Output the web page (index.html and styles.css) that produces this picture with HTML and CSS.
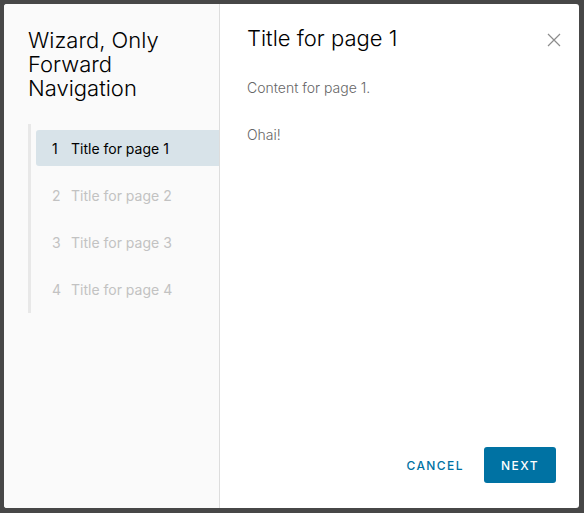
FILE: index.html
```html
<!DOCTYPE html>
<html>
<head>
<meta charset="utf-8">
<link rel="stylesheet" href="styles.css">
</head>
<body>
<div class="modal">
  <aside class="side">
    <h1 class="wizard-title">Wizard, Only Forward Navigation</h1>
    <nav class="steps">
      <div class="step active"><span class="num">1</span><span>Title for page 1</span></div>
      <div class="step"><span class="num">2</span><span>Title for page 2</span></div>
      <div class="step"><span class="num">3</span><span>Title for page 3</span></div>
      <div class="step"><span class="num">4</span><span>Title for page 4</span></div>
    </nav>
  </aside>
  <main class="main">
    <header class="head">
      <h2 class="page-title">Title for page 1</h2>
      <button class="close" aria-label="Close">
        <svg width="14" height="14" viewBox="0 0 14 14"><path d="M1 1L13 13M13 1L1 13" stroke="#8c8c8c" stroke-width="1.2" fill="none"/></svg>
      </button>
    </header>
    <div class="body">
      <p class="text">Content for page 1.</p>
      <p class="text">Ohai!</p>
    </div>
    <footer class="foot">
      <button class="btn btn-link">CANCEL</button>
      <button class="btn btn-primary">NEXT</button>
    </footer>
  </main>
</div>
</body>
</html>
```

FILE: styles.css
```css
html, body { margin: 0; height: 100%; }
body {
  background: #474747;
  padding: 4px 5px 5px 4px;
  box-sizing: border-box;
  font-family: Inter, "Liberation Sans", sans-serif;
}
.modal {
  display: flex;
  height: 100%;
  background: #fff;
  border-radius: 3px;
  overflow: hidden;
}
.side {
  flex: none;
  background: #fafafa;
  border-right: 1px solid #dddddd;
  padding: 24px 0 0 24px;
  box-sizing: content-box;
  width: 191px;
}
.wizard-title {
  margin: 0;
  max-width: 160px;
  font-size: 22px;
  line-height: 24px;
  font-weight: 300;
  color: #000;
}
.steps {
  margin-top: 24px;
  border-left: 3px solid #e8e8e8;
  padding: 6px 0 6px 5px;
  display: flex;
  flex-direction: column;
  gap: 11px;
}
.step {
  height: 36px;
  display: flex;
  align-items: center;
  padding-left: 16px;
  font-size: 14px;
  color: #c2c2c2;
  border-radius: 3px 0 0 3px;
}
.step .num { width: 19px; }
.step.active { background: #d8e3e9; color: #000; }
.main {
  flex: 1;
  display: flex;
  flex-direction: column;
  padding: 22px 23px 25px 27px;
}
.head { display: flex; justify-content: space-between; align-items: flex-start; }
.page-title {
  margin: 0;
  font-size: 22px;
  line-height: 24px;
  font-weight: 300;
  color: #000;
}
.close {
  border: 0;
  background: none;
  padding: 0;
  margin: 7px -5px 0 0;
  width: 14px;
  height: 14px;
  display: flex;
}
.body { flex: 1; padding-top: 28px; }
.text {
  margin: 0 0 27px;
  font-size: 14px;
  line-height: 20px;
  color: #666;
  font-weight: 300;
}
.foot { display: flex; justify-content: flex-end; gap: 8px; }
.btn {
  height: 36px;
  border: 0;
  border-radius: 3px;
  font-family: inherit;
  font-size: 12px;
  font-weight: 500;
  letter-spacing: 0.12em;
  padding: 0 12px;
  cursor: pointer;
}
.btn-link { background: none; color: #0072a3; }
.btn-primary { background: #0072a3; color: #fff; width: 72px; }
```
